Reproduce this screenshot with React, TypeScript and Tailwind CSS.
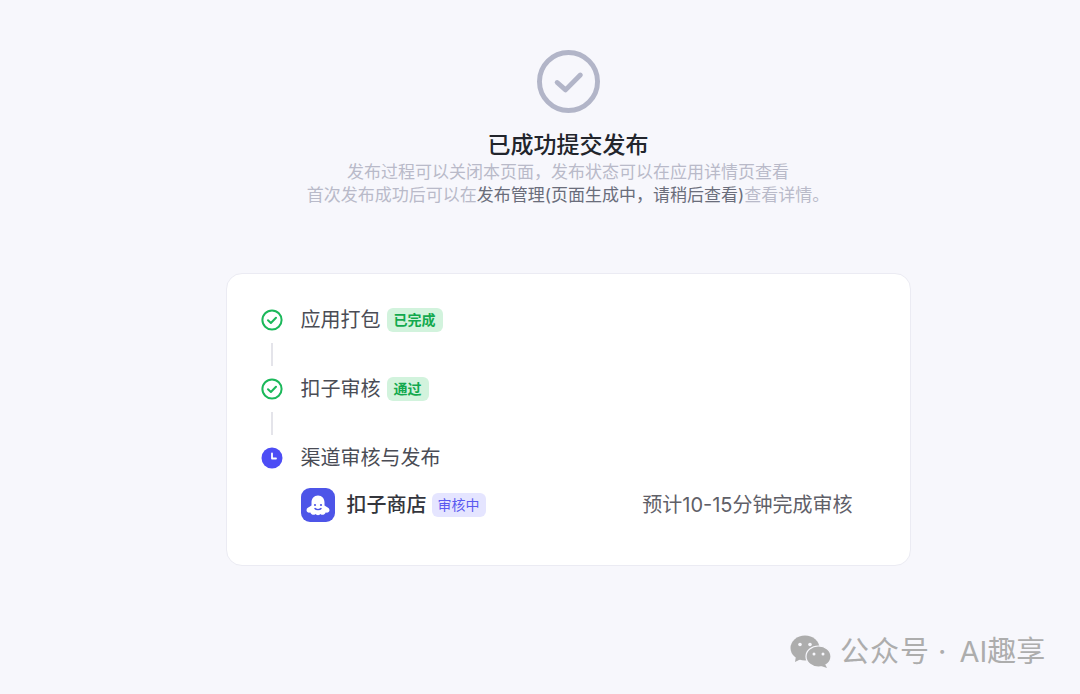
import React from "react";

const CJK = "font-['Inter','Noto_Sans_CJK_SC',sans-serif]";

function CheckIcon() {
  return (
    <svg width="22" height="22" viewBox="0 0 22 22" fill="none" className="shrink-0">
      <circle cx="11" cy="11" r="9.6" stroke="#1bb85a" strokeWidth="2" />
      <path d="M7 11.2l2.9 2.8 5.1-5.2" stroke="#1bb85a" strokeWidth="2" strokeLinecap="round" strokeLinejoin="round" />
    </svg>
  );
}

function ClockIcon() {
  return (
    <svg width="22" height="22" viewBox="0 0 22 22" fill="none" className="shrink-0">
      <circle cx="11" cy="11" r="10.5" fill="#4d4df5" />
      <path d="M11 6.5v5h4" stroke="#fff" strokeWidth="1.8" strokeLinecap="round" strokeLinejoin="round" />
    </svg>
  );
}

function CozeLogo() {
  return (
    <svg width="34" height="34" viewBox="0 0 34 34" className="shrink-0">
      <rect width="34" height="34" rx="9" fill="#4d55e8" />
      <path
        d="M17 7.500c-4 0-6.500 3-6.500 7v3c-1 1-5 2-5 4.700 0 2 2 2.800 3.800 2.300 1 2.500 3.800 3 5.200 1.500 1 1.500 4 1.500 5 0 1.400 1.500 4.200 1 5.200-1.500 1.800.5 3.800-.3 3.800-2.300 0-2.700-4-3.700-5-4.700v-3c0-4-2.500-7-6.500-7z"
        fill="#fff"
      />
      <circle cx="14" cy="17" r="1.100" fill="#4d55e8" />
      <circle cx="20" cy="17" r="1.100" fill="#4d55e8" />
      <path d="M14 20.500c1 1.500 5 1.500 6 0" stroke="#4d55e8" strokeWidth="1.400" fill="none" strokeLinecap="round" />
    </svg>
  );
}

function WeChatIcon() {
  return (
    <svg width="42" height="34" viewBox="0 0 42 34" className="shrink-0">
      <ellipse cx="15" cy="13" rx="14.500" ry="12.500" fill="#adadad" />
      <path d="M6 21l-1 6 7-3.500z" fill="#adadad" />
      <ellipse cx="28.500" cy="21.500" rx="12.500" ry="10.500" fill="#adadad" stroke="#f7f7fc" strokeWidth="1.200" />
      <path d="M35 29l2 4-6-2z" fill="#adadad" />
      <circle cx="10" cy="9.500" r="1.800" fill="#f7f7fc" />
      <circle cx="20" cy="9.500" r="1.800" fill="#f7f7fc" />
      <circle cx="24" cy="19" r="1.500" fill="#f7f7fc" />
      <circle cx="33" cy="19" r="1.500" fill="#f7f7fc" />
    </svg>
  );
}

function Connector() {
  return (
    <div className="w-[22px] h-[23px] flex justify-center my-[11px]">
      <div className="w-[2px] h-full bg-[#e4e4ea]"></div>
    </div>
  );
}

function Badge({ color, children }: { color: string; children: React.ReactNode }) {
  const cls =
    color === "green"
      ? "bg-[#d2f3dd] text-[#12a94e] font-semibold px-[7px] ml-[6px]"
      : "bg-[#e5e5ff] text-[#5a5af0] px-[6px] ml-[5px]";
  return (
    <span className={"h-6 rounded-md flex items-center text-sm " + cls}>
      {children}
    </span>
  );
}

export default function App() {
  return (
    <div className={"relative w-full h-[694px] overflow-hidden bg-[#f7f7fc] flex flex-col items-center pt-[50px] pl-[56px] " + CJK}>
      <svg width="63" height="63" viewBox="0 0 64 64" fill="none">
        <circle cx="32" cy="32" r="29.500" stroke="#b2b5c8" strokeWidth="5" />
        <path d="M20.500 33l8.500 7.500 15-15" stroke="#b2b5c8" strokeWidth="5" strokeLinecap="round" strokeLinejoin="round" />
      </svg>
      <h1 className="mt-4 text-[23px] leading-8 font-medium text-[#22252c]">已成功提交发布</h1>
      <p className="text-[17px] leading-[23px] text-[#b9bac9] text-center">
        发布过程可以关闭本页面，发布状态可以在应用详情页查看
        <br />
        首次发布成功后可以在<span className="text-[#6a6d7b]">发布管理(页面生成中，请稍后查看)</span>查看详情。
      </p>

      <div className="mt-[66px] w-[685px] h-[293px] bg-white rounded-2xl border border-[#ebebf3] pl-[34px] pr-[57px] pt-[34px]">
        <div className="flex items-center h-6">
          <CheckIcon />
          <span className="ml-[18px] text-xl text-[#4a4c55]">应用打包</span>
          <Badge color="green">已完成</Badge>
        </div>
        <Connector />
        <div className="flex items-center h-6">
          <CheckIcon />
          <span className="ml-[18px] text-xl text-[#4a4c55]">扣子审核</span>
          <Badge color="green">通过</Badge>
        </div>
        <Connector />
        <div className="flex items-center h-6">
          <ClockIcon />
          <span className="ml-[18px] text-xl text-[#4a4c55]">渠道审核与发布</span>
        </div>
        <div className="flex items-center mt-[18px] ml-[40px]">
          <CozeLogo />
          <span className="ml-3 text-xl font-medium text-[#33353c]">扣子商店</span>
          <Badge color="purple">审核中</Badge>
          <span className="ml-auto text-xl text-[#5f6068]">预计10-15分钟完成审核</span>
        </div>
      </div>

      <div className="absolute left-[790px] top-[634px] flex items-center text-[29px] leading-9 text-[#adadad] whitespace-nowrap">
        <WeChatIcon />
        <span className="ml-2 tracking-[1px]">公众号</span>
        <span className="ml-2">·</span>
        <span className="ml-[13px]">AI趣享</span>
      </div>
    </div>
  );
}
